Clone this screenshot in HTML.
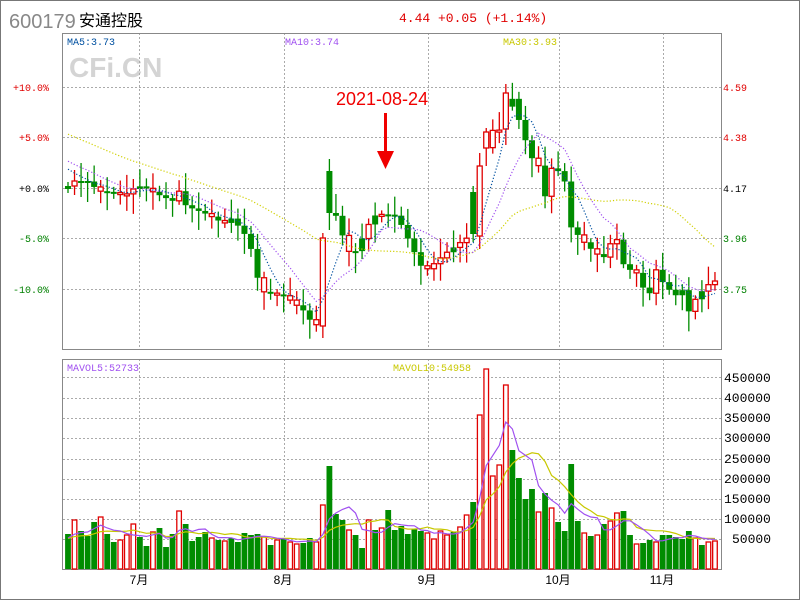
<!DOCTYPE html>
<html><head><meta charset="utf-8"><style>
html,body{margin:0;padding:0;background:#fff}
#w{position:relative;width:798px;height:598px;border:1px solid #777;overflow:hidden}
svg{position:absolute;left:0;top:0}
text{font-family:"Liberation Sans","Noto Sans CJK SC",sans-serif}
.m{font-family:"Liberation Mono","Noto Sans CJK SC",monospace}
</style></head><body><div id="w">
<svg id="s" width="800" height="600" xmlns="http://www.w3.org/2000/svg">
<text x="8" y="27" font-size="20" fill="#888">600179</text>
<text x="78" y="25" font-size="16" fill="#000">安通控股</text>
<text class="m" x="398" y="21" font-size="13" fill="#e00000">4.44 +0.05 (+1.14%)</text>
<text x="68" y="76" font-size="28" font-weight="bold" fill="#d4d4d4">CFi.CN</text>
<g stroke="#aaa" stroke-dasharray="2 2" stroke-width="1">
<line x1="62" x2="720" y1="86.5" y2="86.5"/><line x1="62" x2="720" y1="136.5" y2="136.5"/><line x1="62" x2="720" y1="187.5" y2="187.5"/><line x1="62" x2="720" y1="237.5" y2="237.5"/><line x1="62" x2="720" y1="288.5" y2="288.5"/>
<line x1="62" x2="720" y1="376.5" y2="376.5"/><line x1="62" x2="720" y1="397.5" y2="397.5"/><line x1="62" x2="720" y1="417.5" y2="417.5"/><line x1="62" x2="720" y1="437.5" y2="437.5"/><line x1="62" x2="720" y1="458.5" y2="458.5"/><line x1="62" x2="720" y1="478.5" y2="478.5"/><line x1="62" x2="720" y1="498.5" y2="498.5"/><line x1="62" x2="720" y1="518.5" y2="518.5"/><line x1="62" x2="720" y1="538.5" y2="538.5"/>
<line x1="138.5" x2="138.5" y1="32" y2="348"/><line x1="283.5" x2="283.5" y1="32" y2="348"/><line x1="427.5" x2="427.5" y1="32" y2="348"/><line x1="558.5" x2="558.5" y1="32" y2="348"/><line x1="662.5" x2="662.5" y1="32" y2="348"/>
<line x1="138.5" x2="138.5" y1="358" y2="568"/><line x1="283.5" x2="283.5" y1="358" y2="568"/><line x1="427.5" x2="427.5" y1="358" y2="568"/><line x1="558.5" x2="558.5" y1="358" y2="568"/><line x1="662.5" x2="662.5" y1="358" y2="568"/>
</g>
<rect x="61.5" y="32.5" width="659" height="316" fill="none" stroke="#888"/>
<rect x="61.5" y="358.5" width="659" height="210" fill="none" stroke="#888"/>
<g font-size="10" text-anchor="end" class="m">
<text class="m" x="48" y="90" fill="#e00000">+10.0%</text>
<text class="m" x="48" y="140" fill="#e00000">+5.0%</text>
<text class="m" x="48" y="191" fill="#000">+0.0%</text>
<text class="m" x="48" y="241" fill="#008000">-5.0%</text>
<text class="m" x="48" y="292" fill="#008000">-10.0%</text>
</g>
<g font-size="10">
<text class="m" x="722" y="90" fill="#e00000">4.59</text>
<text class="m" x="722" y="140" fill="#e00000">4.38</text>
<text class="m" x="722" y="191" fill="#000">4.17</text>
<text class="m" x="722" y="241" fill="#008000">3.96</text>
<text class="m" x="722" y="292" fill="#008000">3.75</text>
</g>
<g font-size="13" fill="#000">
<text class="m" x="723" y="381">450000</text><text class="m" x="723" y="401">400000</text><text class="m" x="723" y="421">350000</text><text class="m" x="723" y="441">300000</text><text class="m" x="723" y="462">250000</text><text class="m" x="723" y="482">200000</text><text class="m" x="723" y="502">150000</text><text class="m" x="723" y="522">100000</text><text class="m" x="731" y="542">50000</text>
</g>
<g font-size="12" fill="#000" text-anchor="middle">
<text x="138" y="583">7月</text><text x="282" y="583">8月</text><text x="426" y="583">9月</text><text x="557" y="583">10月</text><text x="661" y="583">11月</text>
</g>
<text class="m" x="66" y="44" font-size="10" fill="#0050a0">MA5:3.73</text>
<text class="m" x="284" y="44" font-size="10" fill="#a050f0">MA10:3.74</text>
<text class="m" x="502" y="44" font-size="10" fill="#c8c800">MA30:3.93</text>
<text class="m" x="66" y="370" font-size="10" fill="#a050f0">MAVOL5:52733</text>
<text class="m" x="392" y="370" font-size="10" fill="#c8c800">MAVOL10:54958</text>
<text x="335" y="104" font-size="18" fill="#f00000">2021-08-24</text>
<rect x="383" y="112" width="3" height="42" fill="#f00000"/>
<polygon points="376,150 393,150 384.5,168" fill="#f00000"/>
<g id="g"></g>
</svg>
<script>
(function(){
var N=100,x0=67,st=6.535;
var vol=[['g',533],['r',519],['g',530],['g',535],['g',521],['r',516],['g',533],['g',541],['r',539],['r',534],['r',523],['g',536],['g',545],['r',531],['g',527],['g',546],['g',533],['r',510],['g',523],['g',540],['g',536],['g',531],['r',537],['g',539],['r',540],['g',537],['g',541],['g',532],['g',534],['g',533],['r',536],['g',544],['r',539],['g',537],['r',541],['r',543],['g',542],['g',537],['r',541],['r',504],['g',465],['g',513],['g',519],['r',529],['g',534],['g',547],['r',519],['g',529],['r',527],['g',509],['g',529],['g',525],['g',533],['g',528],['g',530],['r',532],['r',538],
['r',530],['r',534],['g',531],['r',526],['r',514],['g',501],['r',414],['r',368],['r',475],['r',464],['r',384],['g',449],['g',477],['g',498],['g',488],['r',511],['g',492],['r',507],['g',521],['g',530],['g',463],['g',520],['r',532],['g',535],['r',534],['g',523],['r',520],['r',512],['g',510],['g',534],['r',543],['g',542],['g',539],['r',541],['g',534],['g',534],['g',536],['g',538],['g',530],['r',537],['g',544],['r',541],['r',540]];
var A=[[67,185],[73,180],[86,180],[98,190],[117,192],[123,195],[135,186],[141,185],[160,195],[172,200],[178,190],[185,205],[203,212],[216,218],[222,225],[228,215],[240,228],[247,238],[253,258],[259,290],[284,295],[303,310],[315,328],[322,237],[328,212],[334,212],[346,248],[352,255],[365,230],[371,215],[383,213],[396,215],[408,240],[420,265],[427,268],[445,252],[464,238],[470,235],[476,233],[482,165],[488,131],[495,128],[501,130],[507,92],[513,100],[520,127],[532,160],[538,165],[545,200],[551,165],[563,175],[569,225],[582,240],[594,252],[607,258],[613,220],[619,258],[625,267],[638,273],[644,293],[650,292],[656,265],[662,282],[674,295],[681,288],[687,312],[693,300],[705,285],[714,280]];
function interp(x){for(var k=0;k<A.length-1;k++){if(x<=A[k+1][0]){var t=(x-A[k][0])/(A[k+1][0]-A[k][0]);return A[k][1]+t*(A[k+1][1]-A[k][1]);}}return A[A.length-1][1];}
var C=[],O=[],X=[];
for(var i=0;i<N;i++){X.push(x0+st*i);C.push(interp(X[i]));}
for(i=0;i<N;i++){O.push(i?C[i-1]:188);}
var ov={39:[325,237],40:[170,212],62:[191,233],63:[235,165],64:[147,131],67:[128,92]};
for(var k in ov){O[k]=ov[k][0];C[k]=ov[k][1];}
var s='',H=[];
for(i=0;i<N;i++){
 var x=X[i],top=Math.min(O[i],C[i]),bot=Math.max(O[i],C[i]);if(bot-top<2){bot=top+2;}
 var hi=top-(4+(i*7)%16),lo=bot+(4+(i*5)%17);
 var red=vol[i][0]=='r',col=red?'#e00000':'#008c00';
 s+='<line x1="'+x+'" x2="'+x+'" y1="'+hi+'" y2="'+lo+'" stroke="'+col+'" stroke-width="1.3"/>';
 if(red)s+='<rect x="'+(x-2.5)+'" y="'+top+'" width="5" height="'+(bot-top)+'" fill="#fff" stroke="'+col+'" stroke-width="1.3"/>';
 else s+='<rect x="'+(x-3)+'" y="'+top+'" width="6" height="'+(bot-top)+'" fill="'+col+'"/>';
 var vt=vol[i][1];H.push(568-vt);
 if(red)s+='<rect x="'+(x-2.3)+'" y="'+vt+'" width="4.6" height="'+(568-vt)+'" fill="#fff" stroke="'+col+'" stroke-width="1.3"/>';
 else s+='<rect x="'+(x-2.9)+'" y="'+vt+'" width="5.8" height="'+(568-vt)+'" fill="'+col+'"/>';
}
var seed=[];for(i=0;i<29;i++)seed.push(95+i*2.6);
var all=seed.concat(C);
function ma(arr,n,off){var p=[];for(var i=0;i<N;i++){var j=i+off,sum=0,c=0;for(var q=Math.max(0,j-n+1);q<=j;q++){sum+=arr[q];c++;}p.push(X[i].toFixed(1)+','+(sum/c).toFixed(1));}return p.join(' ');}
s+='<polyline points="'+ma(all,30,29)+'" fill="none" stroke="#d0d000" stroke-width="1.2" stroke-dasharray="1.2 2"/>';
s+='<polyline points="'+ma(all,10,29)+'" fill="none" stroke="#a050f0" stroke-width="1.2" stroke-dasharray="1.2 2"/>';
s+='<polyline points="'+ma(all,5,29)+'" fill="none" stroke="#0050a0" stroke-width="1.2" stroke-dasharray="1.2 2"/>';
var hs=[];for(i=0;i<10;i++)hs.push(30);var ah=hs.concat(H).map(function(h){return 568-h;});
s+='<polyline points="'+ma(ah,10,10)+'" fill="none" stroke="#c8c800" stroke-width="1.2"/>';
s+='<polyline points="'+ma(ah,5,10)+'" fill="none" stroke="#a050f0" stroke-width="1.2"/>';
document.getElementById('g').innerHTML=s;
})();
</script>
</div></body></html>
